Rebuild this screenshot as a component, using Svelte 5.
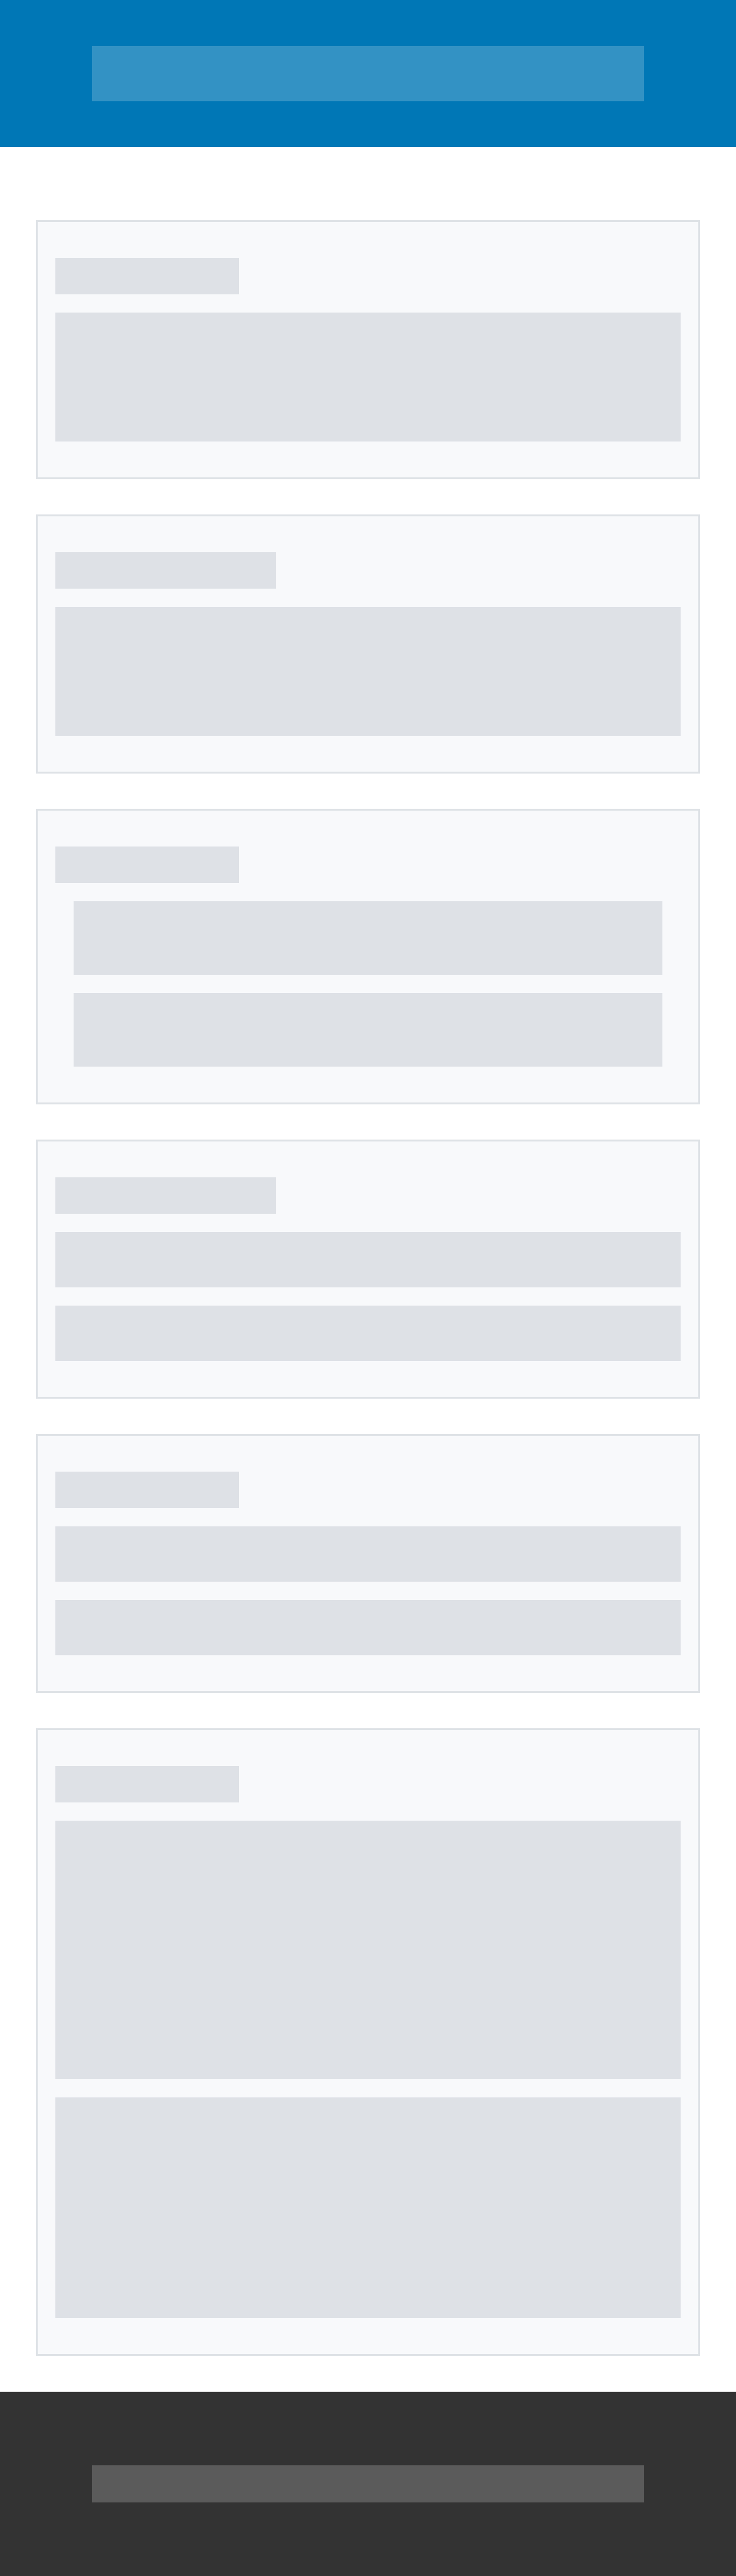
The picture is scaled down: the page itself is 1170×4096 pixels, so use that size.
<script>
  const sections = [
    { wide: false, inset: false, blocks: [205] },
    { wide: true, inset: false, blocks: [205] },
    { wide: false, inset: true, blocks: [117, 117] },
    { wide: true, inset: false, blocks: [88, 88] },
    { wide: false, inset: false, blocks: [88, 88] },
    { wide: false, inset: false, blocks: [411, 351] },
  ];
</script>

<div class="page">
  <header class="header">
    <div class="header-bar"></div>
  </header>

  <main class="content">
    {#each sections as section}
      <section class="card">
        <div class="title" class:wide={section.wide}></div>
        {#each section.blocks as height}
          <div class="block" class:inset={section.inset} style="height: {height}px"></div>
        {/each}
      </section>
    {/each}
  </main>

  <footer class="footer">
    <div class="footer-bar"></div>
  </footer>
</div>

<style>
  :global(body) {
    margin: 0;
    background: #ffffff;
  }

  .page {
    display: flex;
    flex-direction: column;
    min-height: 100vh;
  }

  .header {
    padding: 73px 12.5%;
    background: #0077b6;
  }

  .header-bar {
    height: 88px;
    background: rgba(255, 255, 255, 0.2);
  }

  .content {
    display: flex;
    flex: 1;
    flex-direction: column;
    gap: 56px;
    padding: 116px 57px 57px;
  }

  .card {
    display: flex;
    flex-direction: column;
    gap: 29px;
    padding: 57px 28px;
    border: 3px solid #dee2e6;
    background: #f8f9fb;
  }

  .title {
    width: 292px;
    max-width: 100%;
    height: 58px;
    background: #dee1e6;
  }

  .title.wide {
    width: 351px;
  }

  .block {
    background: #dee1e6;
  }

  .block.inset {
    margin: 0 29px;
  }

  .footer {
    padding: 117px 12.5%;
    background: #333333;
  }

  .footer-bar {
    height: 59px;
    background: rgba(255, 255, 255, 0.2);
  }
</style>
